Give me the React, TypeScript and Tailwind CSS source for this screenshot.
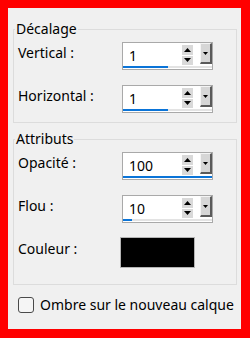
import React from "react";

const font = { fontFamily: '"Noto Sans", "Open Sans", sans-serif' };

function Spin({ value, pct }: { value: string; pct: number }) {
  return (
    <div className="w-[91px] h-[28px] border border-[#a9a9a9] bg-white flex flex-col">
      <div className="flex flex-1 items-stretch">
        <div className="flex-1 pl-[6px] pt-[3px] text-[14px] leading-[20px] text-black">{value}</div>
        <div className="w-[11px] flex flex-col gap-[1px] pt-[2px] pb-[1px]">
          <div className="flex-1 bg-[#d9d9d9] flex items-center justify-center">
            <svg width="7" height="4" viewBox="0 0 7 4"><path d="M3.5 0L7 4H0Z" fill="#000" /></svg>
          </div>
          <div className="flex-1 bg-[#d9d9d9] flex items-center justify-center">
            <svg width="7" height="4" viewBox="0 0 7 4"><path d="M0 0H7L3.5 4Z" fill="#000" /></svg>
          </div>
        </div>
        <div className="w-[7px]" />
        <div className="w-[12px] h-[21px] bg-[#d6d6d6] border-t border-l border-t-[#f4f4f4] border-l-[#f4f4f4] border-r-2 border-b-2 border-r-[#5a5a5a] border-b-[#5a5a5a] flex items-center justify-center">
          <svg width="5" height="3" viewBox="0 0 5 3"><path d="M0 0H5L2.5 3Z" fill="#000" /></svg>
        </div>
      </div>
      <div className="h-[3px] bg-[#e3e3e3] mb-[1px]">
        <div className="h-full bg-[#0a74d8]" style={{ width: `${pct}%` }} />
      </div>
    </div>
  );
}

export default function App() {
  return (
    <div className="w-[250px] h-[338px] bg-[#ff0000] pt-[8px] pl-[8px] pr-[9px] pb-[9px]" style={font}>
      <div className="w-full h-full bg-[#f0f0f0] pl-[5px] pr-[4px] pt-[21px] flex flex-col">
        <div className="relative border border-[#dcdcdc] pt-[12px] pb-[9px]">
          <span className="absolute left-[1px] -top-[11px] px-[1px] bg-[#f0f0f0] text-[14px] leading-[20px] text-black">Décalage</span>
          <div className="flex items-start">
            <div className="w-[108px] pl-[4px] pt-[1px] text-[14px] leading-[20px] text-black">Vertical :</div>
            <Spin value="1" pct={50.5} />
          </div>
          <div className="flex items-start mt-[15px]">
            <div className="w-[108px] pl-[4px] pt-[1px] text-[14px] leading-[20px] text-black">Horizontal :</div>
            <Spin value="1" pct={50.5} />
          </div>
        </div>
        <div className="relative border border-[#dcdcdc] pt-[12px] pb-[16px] mt-[16px]">
          <span className="absolute left-[1px] -top-[11px] px-[1px] bg-[#f0f0f0] text-[14px] leading-[20px] text-black">Attributs</span>
          <div className="flex items-start">
            <div className="w-[108px] pl-[4px] pt-[1px] text-[14px] leading-[20px] text-black">Opacité :</div>
            <Spin value="100" pct={100} />
          </div>
          <div className="flex items-start mt-[15px]">
            <div className="w-[108px] pl-[4px] pt-[1px] text-[14px] leading-[20px] text-black">Flou :</div>
            <Spin value="10" pct={10} />
          </div>
          <div className="flex items-start mt-[14px]">
            <div className="w-[106px] pl-[4px] pt-[2px] text-[14px] leading-[20px] text-black">Couleur :</div>
            <div className="w-[75px] h-[31px] border border-[#b4b4b4] bg-black" />
          </div>
        </div>
        <div className="flex items-center mt-[10px] pl-[5px]">
          <div className="w-[16px] h-[16px] rounded-[3px] border border-[#4a4a4a] bg-[#f5f5f5]" />
          <span className="ml-[6px] text-[14px] leading-[20px] text-black">Ombre sur le nouveau calque</span>
        </div>
      </div>
    </div>
  );
}
